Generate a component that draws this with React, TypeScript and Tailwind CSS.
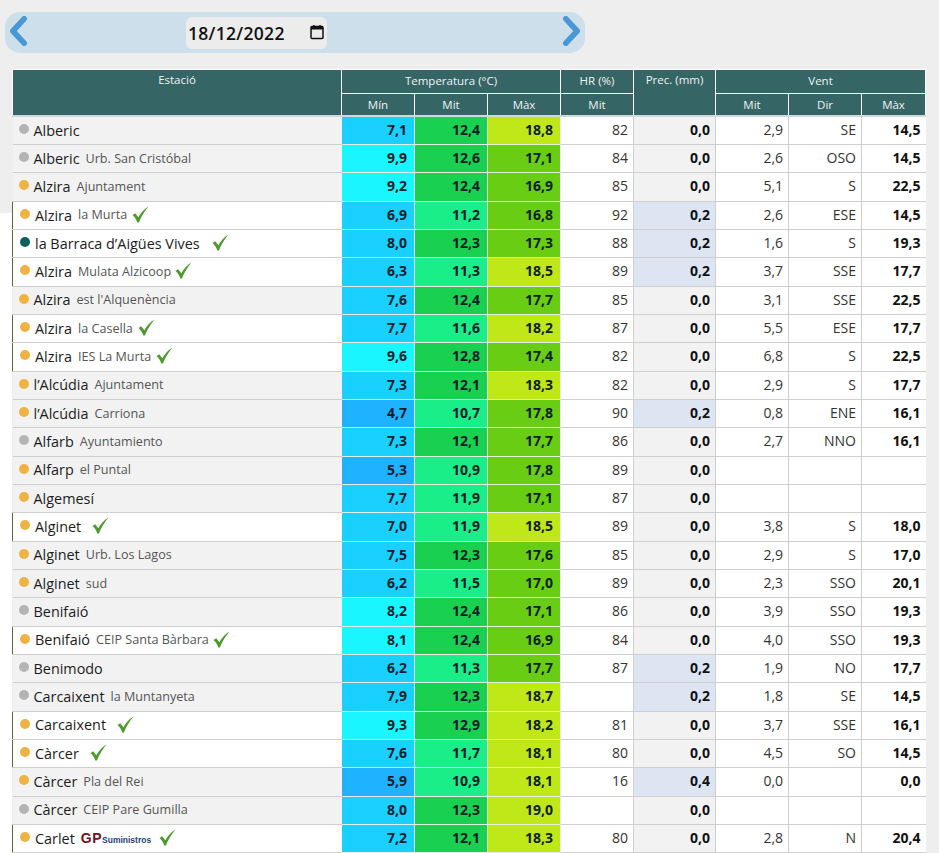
const rows = [
  { name: "Alberic", sub: "", dot: "grey", min: 7.1, mit: 12.4, max: 18.8, hr: "82", prec: "0,0", wind: "2,9", dir: "SE", gust: "14,5" },
  { name: "Alberic", sub: "Urb. San Cristóbal", dot: "grey", min: 9.9, mit: 12.6, max: 17.1, hr: "84", prec: "0,0", wind: "2,6", dir: "OSO", gust: "14,5" },
  { name: "Alzira", sub: "Ajuntament", dot: "orange", min: 9.2, mit: 12.4, max: 16.9, hr: "85", prec: "0,0", wind: "5,1", dir: "S", gust: "22,5" },
  { name: "Alzira", sub: "la Murta", dot: "orange", check: "ml-[5px]", min: 6.9, mit: 11.2, max: 16.8, hr: "92", prec: "0,2", wind: "2,6", dir: "ESE", gust: "14,5" },
  { name: "la Barraca d’Aigües Vives", sub: "", dot: "teal", check: "ml-3", min: 8.0, mit: 12.3, max: 17.3, hr: "88", prec: "0,2", wind: "1,6", dir: "S", gust: "19,3" },
  { name: "Alzira", sub: "Mulata Alzicoop", dot: "orange", check: "ml-1", min: 6.3, mit: 11.3, max: 18.5, hr: "89", prec: "0,2", wind: "3,7", dir: "SSE", gust: "17,7" },
  { name: "Alzira", sub: "est l'Alquenència", dot: "orange", min: 7.6, mit: 12.4, max: 17.7, hr: "85", prec: "0,0", wind: "3,1", dir: "SSE", gust: "22,5" },
  { name: "Alzira", sub: "la Casella", dot: "orange", check: "ml-[5px]", min: 7.7, mit: 11.6, max: 18.2, hr: "87", prec: "0,0", wind: "5,5", dir: "ESE", gust: "17,7" },
  { name: "Alzira", sub: "IES La Murta", dot: "orange", check: "ml-[5px]", min: 9.6, mit: 12.8, max: 17.4, hr: "82", prec: "0,0", wind: "6,8", dir: "S", gust: "22,5" },
  { name: "l’Alcúdia", sub: "Ajuntament", dot: "orange", min: 7.3, mit: 12.1, max: 18.3, hr: "82", prec: "0,0", wind: "2,9", dir: "S", gust: "17,7" },
  { name: "l’Alcúdia", sub: "Carriona", dot: "orange", min: 4.7, mit: 10.7, max: 17.8, hr: "90", prec: "0,2", wind: "0,8", dir: "ENE", gust: "16,1" },
  { name: "Alfarb", sub: "Ayuntamiento", dot: "grey", min: 7.3, mit: 12.1, max: 17.7, hr: "86", prec: "0,0", wind: "2,7", dir: "NNO", gust: "16,1" },
  { name: "Alfarp", sub: "el Puntal", dot: "orange", min: 5.3, mit: 10.9, max: 17.8, hr: "89", prec: "0,0", wind: "", dir: "", gust: "" },
  { name: "Algemesí", sub: "", dot: "orange", min: 7.7, mit: 11.9, max: 17.1, hr: "87", prec: "0,0", wind: "", dir: "", gust: "" },
  { name: "Alginet", sub: "", dot: "orange", check: "ml-[11px]", min: 7.0, mit: 11.9, max: 18.5, hr: "89", prec: "0,0", wind: "3,8", dir: "S", gust: "18,0" },
  { name: "Alginet", sub: "Urb. Los Lagos", dot: "orange", min: 7.5, mit: 12.3, max: 17.6, hr: "85", prec: "0,0", wind: "2,9", dir: "S", gust: "17,0" },
  { name: "Alginet", sub: "sud", dot: "orange", min: 6.2, mit: 11.5, max: 17.0, hr: "89", prec: "0,0", wind: "2,3", dir: "SSO", gust: "20,1" },
  { name: "Benifaió", sub: "", dot: "grey", min: 8.2, mit: 12.4, max: 17.1, hr: "86", prec: "0,0", wind: "3,9", dir: "SSO", gust: "19,3" },
  { name: "Benifaió", sub: "CEIP Santa Bàrbara", dot: "orange", check: "ml-1", min: 8.1, mit: 12.4, max: 16.9, hr: "84", prec: "0,0", wind: "4,0", dir: "SSO", gust: "19,3" },
  { name: "Benimodo", sub: "", dot: "grey", min: 6.2, mit: 11.3, max: 17.7, hr: "87", prec: "0,2", wind: "1,9", dir: "NO", gust: "17,7" },
  { name: "Carcaixent", sub: "la Muntanyeta", dot: "grey", min: 7.9, mit: 12.3, max: 18.7, hr: "", prec: "0,2", wind: "1,8", dir: "SE", gust: "14,5" },
  { name: "Carcaixent", sub: "", dot: "orange", check: "ml-[11px]", min: 9.3, mit: 12.9, max: 18.2, hr: "81", prec: "0,0", wind: "3,7", dir: "SSE", gust: "16,1" },
  { name: "Càrcer", sub: "", dot: "orange", check: "ml-[11px]", min: 7.6, mit: 11.7, max: 18.1, hr: "80", prec: "0,0", wind: "4,5", dir: "SO", gust: "14,5" },
  { name: "Càrcer", sub: "Pla del Rei", dot: "orange", min: 5.9, mit: 10.9, max: 18.1, hr: "16", prec: "0,4", wind: "0,0", dir: "", gust: "0,0" },
  { name: "Càrcer", sub: "CEIP Pare Gumilla", dot: "grey", min: 8.0, mit: 12.3, max: 19.0, hr: "", prec: "0,0", wind: "", dir: "", gust: "" },
  { name: "Carlet", sub: "", dot: "orange", logo: true, check: "ml-2", min: 7.2, mit: 12.1, max: 18.3, hr: "80", prec: "0,0", wind: "2,8", dir: "N", gust: "20,4" },
];

const dotColors: Record<string, string> = {
  grey: "bg-[#b4b4b4]",
  orange: "bg-[#efb343]",
  teal: "bg-[#0c5f5e]",
};

const minColor = (v: number) => {
  if (v < 6) return "bg-[#1fb2ff]";
  if (v <= 8) return "bg-[#19d0ff]";
  return "bg-[#19f6ff]";
};
const mitColor = (v: number) => (v >= 12 ? "bg-[#1ad050]" : "bg-[#1aee88]");
const maxColor = (v: number) => (v >= 18 ? "bg-[#c0e818]" : "bg-[#69cd14]");
const fmt = (v: number) => v.toFixed(1).replace(".", ",");

const Check = ({ className }: { className?: string }) => (
  <svg viewBox="0 0 16 16" className={`inline-block w-[17px] h-[17px] shrink-0 -mt-[2px] ${className}`}>
    <path d="M0.5 8.5 L3 6.8 L6 10.5 C8 7 11 3.2 15.5 0.5 C12 4.5 9 9.5 6.5 15.5 L5 15.5 C4 12.5 2.5 10.5 0.5 8.5 Z" fill="#4f9a2f" />
  </svg>
);

const Chevron = ({ flip }: { flip?: boolean }) => (
  <svg viewBox="0 0 20 32" className="w-[19px] h-[30px] -mt-1">
    <path d={flip ? "M4 3 L16 16 L4 29" : "M16 3 L4 16 L16 29"} fill="none" stroke="#4a97d8" strokeWidth="6" strokeLinecap="round" strokeLinejoin="round" />
  </svg>
);

const th = "border border-white font-normal text-[11.5px] text-[#eef3f3] align-middle";
const colorTd = "border-b border-r border-[#e3efe3] text-right pr-[7px] pb-[2px] font-bold text-[14px] text-[#10202a]";
const grayTd = "border-b border-r border-[#cfcfcf] text-right pr-[5px] pb-[2px] text-[14px] text-[#333]";

export default function App() {
  return (
    <div className="min-h-screen overflow-hidden bg-[#eeeeee] font-['Open_Sans',sans-serif]">
      <div className="pl-[5px] pt-3">
        <div className="w-[580px] h-[41px] rounded-[15px] bg-[#cddfeb] flex items-center px-1">
          <Chevron />
          <div className="w-[141px] h-8 ml-[158px] rounded-md bg-[#ececec] flex items-center justify-between pl-0.5 pt-[1px] text-[17.5px] font-semibold text-[#111]">
            <span className="tracking-[0.3px]">18/12/2022</span>
            <svg viewBox="0 0 16 16" className="w-4 h-4 mr-[2px] -mt-0.5">
              <rect x="2" y="2.5" width="12" height="12" rx="1" fill="none" stroke="#111" strokeWidth="1.5" />
              <rect x="2" y="2.5" width="12" height="3" fill="#111" />
              <path d="M5 1v2M11 1v2" stroke="#111" strokeWidth="1.5" />
            </svg>
          </div>
          <div className="ml-auto flex">
            <Chevron flip />
          </div>
        </div>
      </div>

      <div className="flex pt-4">
        <div className="w-3 shrink-0 bg-[linear-gradient(#eeeeee_144px,#ffffff_144px)]" />
        <table className="table-fixed w-[913px] border-collapse">
          <colgroup>
            <col className="w-[329px]" />
            <col className="w-[73px]" />
            <col className="w-[73px]" />
            <col className="w-[73px]" />
            <col className="w-[73px]" />
            <col className="w-[82px]" />
            <col className="w-[73px]" />
            <col className="w-[73px]" />
            <col className="w-[64px]" />
          </colgroup>
          <thead className="bg-[#366566] border-b-2 border-b-[#d0d8d8]">
            <tr className="h-6">
              <th rowSpan={2} className={`${th} !align-top pt-[1px]`}>Estació</th>
              <th colSpan={3} className={`${th} pb-[2px]`}>Temperatura (°C)</th>
              <th className={`${th} pb-[2px]`}>HR (%)</th>
              <th rowSpan={2} className={`${th} !align-top pt-[1px]`}>Prec. (mm)</th>
              <th colSpan={3} className={`${th} pb-[2px]`}>Vent</th>
            </tr>
            <tr className="h-[22.5px]">
              <th className={th}>Mín</th>
              <th className={th}>Mit</th>
              <th className={th}>Màx</th>
              <th className={th}>Mit</th>
              <th className={th}>Mit</th>
              <th className={th}>Dir</th>
              <th className={th}>Màx</th>
            </tr>
          </thead>
          <tbody>
            {rows.map((r, i) => (
              <tr key={i} className="h-[28.33px]">
                <td className={`border-b border-[#cfcfcf] p-0 ${r.check ? "bg-white border-l border-l-[#5d6b2c]" : "bg-[#f2f2f2]"}`}>
                  <div className={`flex items-center h-[27px] whitespace-nowrap ${r.check ? "pl-[7px]" : "pl-[6px]"}`}>
                    <span className={`w-2.5 h-2.5 rounded-full -mt-[3px] mr-[5px] ${dotColors[r.dot]}`} />
                    <span className="text-[14.4px] text-[#1c1c1c]">{r.name}</span>
                    {r.sub && <span className="ml-[6px] text-[12.6px] text-[#555] pt-[1px]">{r.sub}</span>}
                    {r.logo && (
                      <span className="ml-[6px] flex items-baseline font-['Liberation_Sans',sans-serif] font-bold">
                        <span className="text-[14px] font-black text-[#6e1423] tracking-[0.5px]">GP</span>
                        <span className="text-[8.5px] text-[#1f3f7a]">Suministros</span>
                      </span>
                    )}
                    {r.check && <Check className={r.check} />}
                  </div>
                </td>
                <td className={`${colorTd} ${minColor(r.min)}`}>{fmt(r.min)}</td>
                <td className={`${colorTd} ${mitColor(r.mit)}`}>{fmt(r.mit)}</td>
                <td className={`${colorTd} ${maxColor(r.max)}`}>{fmt(r.max)}</td>
                <td className={`${grayTd} bg-white`}>{r.hr}</td>
                <td className={`${grayTd} font-bold !text-[#111] ${r.prec === "0,0" ? "bg-[#f2f2f2]" : "bg-[#dde5f3]"}`}>{r.prec}</td>
                <td className={`${grayTd} bg-white`}>{r.wind}</td>
                <td className={`${grayTd} bg-white`}>{r.dir}</td>
                <td className={`${grayTd} bg-white font-bold !text-[#111] !border-r-0 pr-1`}>{r.gust}</td>
              </tr>
            ))}
          </tbody>
        </table>
      </div>
    </div>
  );
}
